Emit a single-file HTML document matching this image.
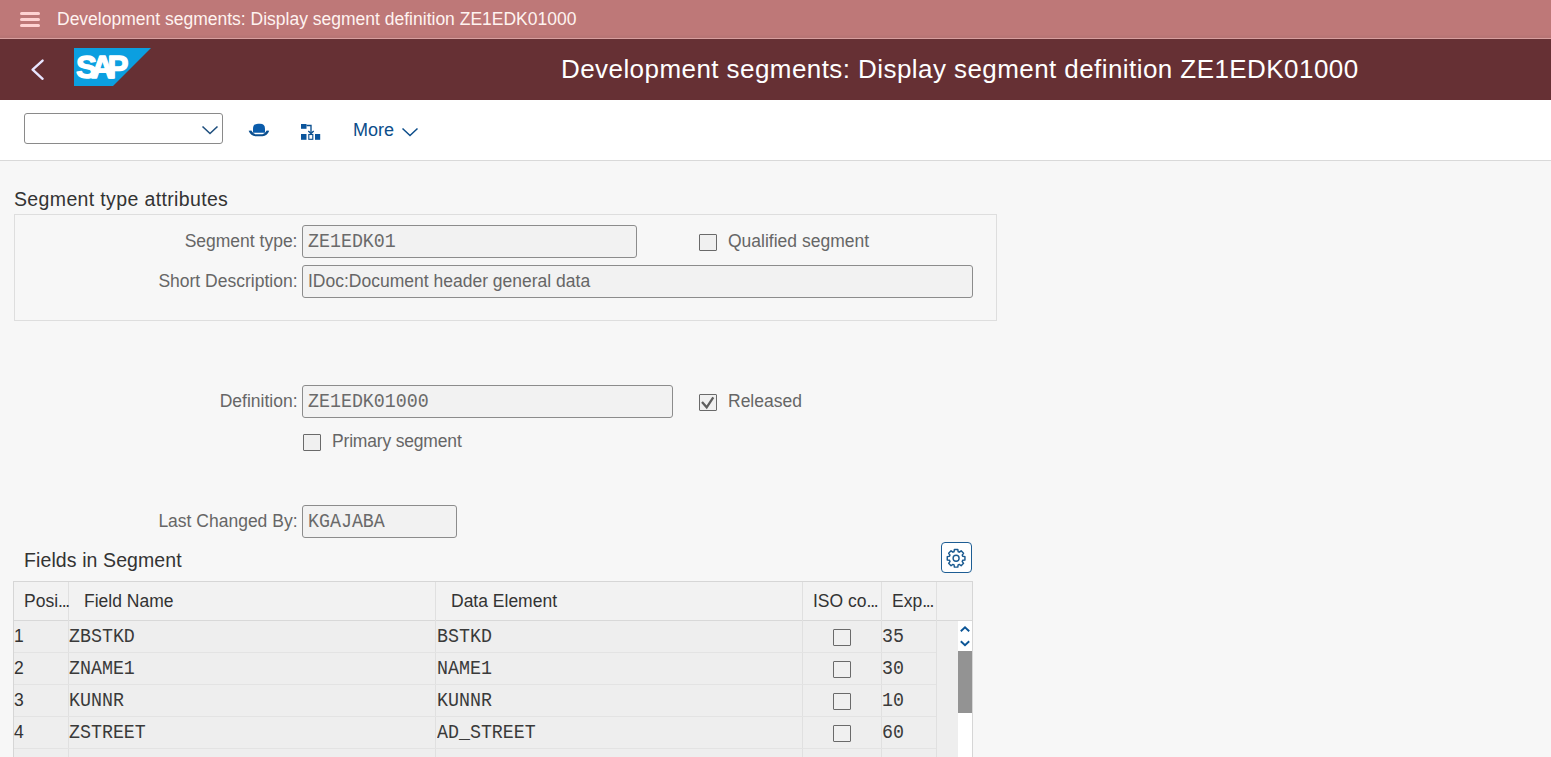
<!DOCTYPE html>
<html><head><meta charset="utf-8">
<style>
*{box-sizing:border-box}
html,body{margin:0;padding:0}
body{width:1551px;height:757px;overflow:hidden;position:relative;background:#f7f7f7;font-family:"Liberation Sans",sans-serif}
.a{position:absolute;white-space:pre;line-height:1}
#top{position:absolute;left:0;top:0;width:1551px;height:38px;background:linear-gradient(#be7878 0,#be7878 35px,#b87575 36px,#b87575 38px)}
#topline{position:absolute;left:0;top:38px;width:1551px;height:1px;background:#d89f9f}
#bar{position:absolute;left:0;top:39px;width:1551px;height:61px;background:#663034}
#tool{position:absolute;left:0;top:100px;width:1551px;height:61px;background:#fff;border-bottom:1px solid #d9d9d9}
.lbl{color:#666;font-size:17.5px}
.inp{position:absolute;background:#f2f2f2;border:1px solid #8c8c8c;border-radius:3px}
.mono{font-family:"Liberation Mono",monospace;color:#6a6a6a;font-size:18.3px;transform:scaleY(1.085);transform-origin:0 2px}
.cb{position:absolute;width:17.5px;height:17px;border:1.5px solid #6a6a6a;background:#f0f0f0;border-radius:1px}
.hdr{color:#333;font-size:17.5px}
.el{letter-spacing:-1.2px}
.cell{font-family:"Liberation Mono",monospace;color:#3a3a3a;font-size:18.3px;transform:scaleY(1.085);transform-origin:0 2px}
</style></head><body>
<div id="top"></div>
<div id="topline"></div>
<!-- hamburger -->
<div class="a" style="left:20px;top:12px;width:20px;height:3px;background:#ffd3d3;border-radius:1.5px"></div>
<div class="a" style="left:20px;top:18px;width:20px;height:3px;background:#ffd3d3;border-radius:1.5px"></div>
<div class="a" style="left:20px;top:24px;width:20px;height:3px;background:#ffd3d3;border-radius:1.5px"></div>
<div class="a" style="left:57px;top:11px;font-size:17.5px;color:#fff3f0">Development segments: Display segment definition ZE1EDK01000</div>

<div id="bar"></div>
<svg class="a" style="left:0;top:39px" width="200" height="61" viewBox="0 39 200 61">
<polyline points="42.6,60.6 32.6,69.6 42.6,78.8" fill="none" stroke="#e8e6ff" stroke-width="2.4" stroke-linecap="round" stroke-linejoin="round"/>
<polygon points="74,48 151,48 113,86 74,86" fill="#0b9fe0"/>
<text x="76" y="77.6" font-family="Liberation Sans" font-weight="bold" font-size="31.5" fill="#fff" stroke="#fff" stroke-width="1.3" stroke-linejoin="round" textLength="52.5" lengthAdjust="spacing">SAP</text>
</svg>
<div class="a" style="left:561px;top:56px;font-size:26px;letter-spacing:0.43px;color:#fff">Development segments: Display segment definition ZE1EDK01000</div>

<div id="tool"></div>
<div class="a" style="left:24px;top:113px;width:199px;height:31px;border:1px solid #8a8a8a;border-radius:3px;background:#fff"></div>
<svg class="a" style="left:200px;top:122px" width="20" height="16" viewBox="200 122 20 16">
<polyline points="202.5,126.5 210,133.5 217.5,126.5" fill="none" stroke="#1f4f7e" stroke-width="1.6"/>
</svg>
<!-- hat -->
<svg class="a" style="left:245px;top:118px" width="30" height="24" viewBox="245 118 30 24">
<path d="M253,132.7 V128.8 Q253,123.8 258,123.8 H260 Q265,123.8 265,128.8 V132.7 Z" fill="#0b5cab"/>
<path d="M248.6,130.8 L251.3,130.6 Q253,133.7 255.5,134.3 H262.5 Q265,133.7 266.7,130.6 L269.2,130.8 Q267.2,136.1 262.5,136.3 H255.5 Q250.8,136.1 248.6,130.8 Z" fill="#0b4f8f"/>
</svg>
<!-- hierarchy -->
<svg class="a" style="left:297px;top:120px" width="28" height="24" viewBox="297 120 28 24">
<rect x="301" y="124" width="5.5" height="4.8" fill="#0b559c"/>
<polyline points="306.5,125.5 311,125.5 311,133" fill="none" stroke="#0b4f8f" stroke-width="1.35"/>
<polyline points="308.3,131 311,133.6 313.7,131" fill="none" stroke="#0b4f8f" stroke-width="1.35"/>
<rect x="301" y="134" width="5.5" height="5.8" fill="#0b559c"/>
<rect x="308.8" y="134.5" width="4" height="4.8" fill="#fff" stroke="#0b4f8f" stroke-width="1.1"/>
<rect x="315" y="134" width="5.2" height="5.8" fill="#0b559c"/>
</svg>
<div class="a" style="left:353px;top:121px;font-size:18px;color:#0c4d8a">More</div>
<svg class="a" style="left:398px;top:124px" width="24" height="16" viewBox="398 124 24 16">
<polyline points="402.5,128.5 410,135.5 417.5,128.5" fill="none" stroke="#0c4d8a" stroke-width="1.5"/>
</svg>

<!-- Segment type attributes -->
<div class="a" style="left:14px;top:189.5px;font-size:19.5px;letter-spacing:0.36px;color:#333">Segment type attributes</div>
<div class="a" style="left:14px;top:214px;width:983px;height:107px;border:1px solid #dedede"></div>

<div class="a lbl" style="right:1253.5px;top:233px">Segment type:</div>
<div class="inp" style="left:302px;top:225px;width:335px;height:33px"></div>
<div class="a mono" style="left:308px;top:232px">ZE1EDK01</div>
<div class="cb" style="left:699px;top:233.5px"></div>
<div class="a lbl" style="left:728px;top:233px">Qualified segment</div>

<div class="a lbl" style="right:1253.5px;top:273px">Short Description:</div>
<div class="inp" style="left:302px;top:265px;width:671px;height:33px"></div>
<div class="a lbl" style="left:308px;top:273px">IDoc:Document header general data</div>

<div class="a lbl" style="right:1253.5px;top:393px">Definition:</div>
<div class="inp" style="left:302px;top:385px;width:371px;height:33px"></div>
<div class="a mono" style="left:308px;top:392px">ZE1EDK01000</div>
<div class="cb" style="left:699px;top:393.5px"></div>
<svg class="a" style="left:699px;top:393px" width="18" height="18" viewBox="699 393 18 18">
<polyline points="702,402 706.7,407.3 713.3,397.4" fill="none" stroke="#5e5e5e" stroke-width="2.3"/>
</svg>
<div class="a lbl" style="left:728px;top:393px">Released</div>

<div class="cb" style="left:303px;top:433.5px"></div>
<div class="a lbl" style="left:332px;top:433px;letter-spacing:-0.18px">Primary segment</div>

<div class="a lbl" style="right:1253.5px;top:513px">Last Changed By:</div>
<div class="inp" style="left:302px;top:505px;width:155px;height:33px"></div>
<div class="a mono" style="left:308px;top:512px">KGAJABA</div>

<!-- Fields in Segment -->
<div class="a" style="left:24px;top:551px;font-size:19.5px;letter-spacing:0.1px;color:#333">Fields in Segment</div>
<div class="a" style="left:941px;top:542px;width:31px;height:31px;border:1px solid #1d5d94;border-radius:4px;background:#fff"></div>
<svg class="a" style="left:941px;top:542px" width="31" height="31" viewBox="-15.1 -16.3 31 31">
<path d="M-2.04,-6.59 L-1.70,-8.84 L1.70,-8.84 L2.04,-6.59 L3.22,-6.10 L5.05,-7.45 L7.45,-5.05 L6.10,-3.22 L6.59,-2.04 L8.84,-1.70 L8.84,1.70 L6.59,2.04 L6.10,3.22 L7.45,5.05 L5.05,7.45 L3.22,6.10 L2.04,6.59 L1.70,8.84 L-1.70,8.84 L-2.04,6.59 L-3.22,6.10 L-5.05,7.45 L-7.45,5.05 L-6.10,3.22 L-6.59,2.04 L-8.84,1.70 L-8.84,-1.70 L-6.59,-2.04 L-6.10,-3.22 L-7.45,-5.05 L-5.05,-7.45 L-3.22,-6.10 Z" fill="none" stroke="#1a5a90" stroke-width="1.45" stroke-linejoin="round"/>
<circle cx="0" cy="0" r="3" fill="none" stroke="#1a5a90" stroke-width="1.4"/>
</svg>

<!-- table -->
<div class="a" style="left:13px;top:581px;width:960px;height:176px;background:#eeeeee;border-left:1px solid #d6d6d6;border-right:1px solid #d6d6d6;border-top:1px solid #d6d6d6"></div>
<div class="a" style="left:14px;top:582px;width:958px;height:39px;background:#f2f2f2;border-bottom:1px solid #d8d8d8"></div>
<div class="a" style="left:68px;top:582px;width:1px;height:175px;background:#e0e0e0"></div>
<div class="a" style="left:435px;top:582px;width:1px;height:175px;background:#e0e0e0"></div>
<div class="a" style="left:802px;top:582px;width:1px;height:175px;background:#e0e0e0"></div>
<div class="a" style="left:881px;top:582px;width:1px;height:175px;background:#e0e0e0"></div>
<div class="a" style="left:936px;top:582px;width:1px;height:175px;background:#e0e0e0"></div>
<div class="a" style="left:14px;top:652px;width:922px;height:1px;background:#e3e3e3"></div>
<div class="a" style="left:14px;top:684px;width:922px;height:1px;background:#e3e3e3"></div>
<div class="a" style="left:14px;top:716px;width:922px;height:1px;background:#e3e3e3"></div>
<div class="a" style="left:14px;top:748px;width:922px;height:1px;background:#e3e3e3"></div>

<div class="a hdr" style="left:24px;top:593px">Posi<span class="el">...</span></div>
<div class="a hdr" style="left:84px;top:593px">Field Name</div>
<div class="a hdr" style="left:451px;top:593px">Data Element</div>
<div class="a hdr" style="left:813px;top:593px">ISO co<span class="el">...</span></div>
<div class="a hdr" style="left:892px;top:593px">Exp<span class="el">...</span></div>
<div class="a hdr" style="left:14px;top:628px">1</div>
<div class="a cell" style="left:69px;top:627px">ZBSTKD</div>
<div class="a cell" style="left:437px;top:627px">BSTKD</div>
<div class="cb" style="left:833px;top:629px"></div>
<div class="a cell" style="left:882px;top:627px">35</div>
<div class="a hdr" style="left:14px;top:660px">2</div>
<div class="a cell" style="left:69px;top:659px">ZNAME1</div>
<div class="a cell" style="left:437px;top:659px">NAME1</div>
<div class="cb" style="left:833px;top:661px"></div>
<div class="a cell" style="left:882px;top:659px">30</div>
<div class="a hdr" style="left:14px;top:692px">3</div>
<div class="a cell" style="left:69px;top:691px">KUNNR</div>
<div class="a cell" style="left:437px;top:691px">KUNNR</div>
<div class="cb" style="left:833px;top:693px"></div>
<div class="a cell" style="left:882px;top:691px">10</div>
<div class="a hdr" style="left:14px;top:724px">4</div>
<div class="a cell" style="left:69px;top:723px">ZSTREET</div>
<div class="a cell" style="left:437px;top:723px">AD_STREET</div>
<div class="cb" style="left:833px;top:725px"></div>
<div class="a cell" style="left:882px;top:723px">60</div>

<!-- scrollbar -->
<div class="a" style="left:958px;top:621px;width:14px;height:136px;background:#fff"></div>
<div class="a" style="left:958px;top:651px;width:14px;height:62px;background:#939393"></div>
<svg class="a" style="left:958px;top:621px" width="14" height="30" viewBox="958 621 14 30">
<polyline points="960.8,631.2 965,627.2 969.2,631.2" fill="none" stroke="#0b5596" stroke-width="1.9"/>
<polyline points="960.8,641.2 965,645.2 969.2,641.2" fill="none" stroke="#0b5596" stroke-width="1.9"/>
</svg>
</body></html>
